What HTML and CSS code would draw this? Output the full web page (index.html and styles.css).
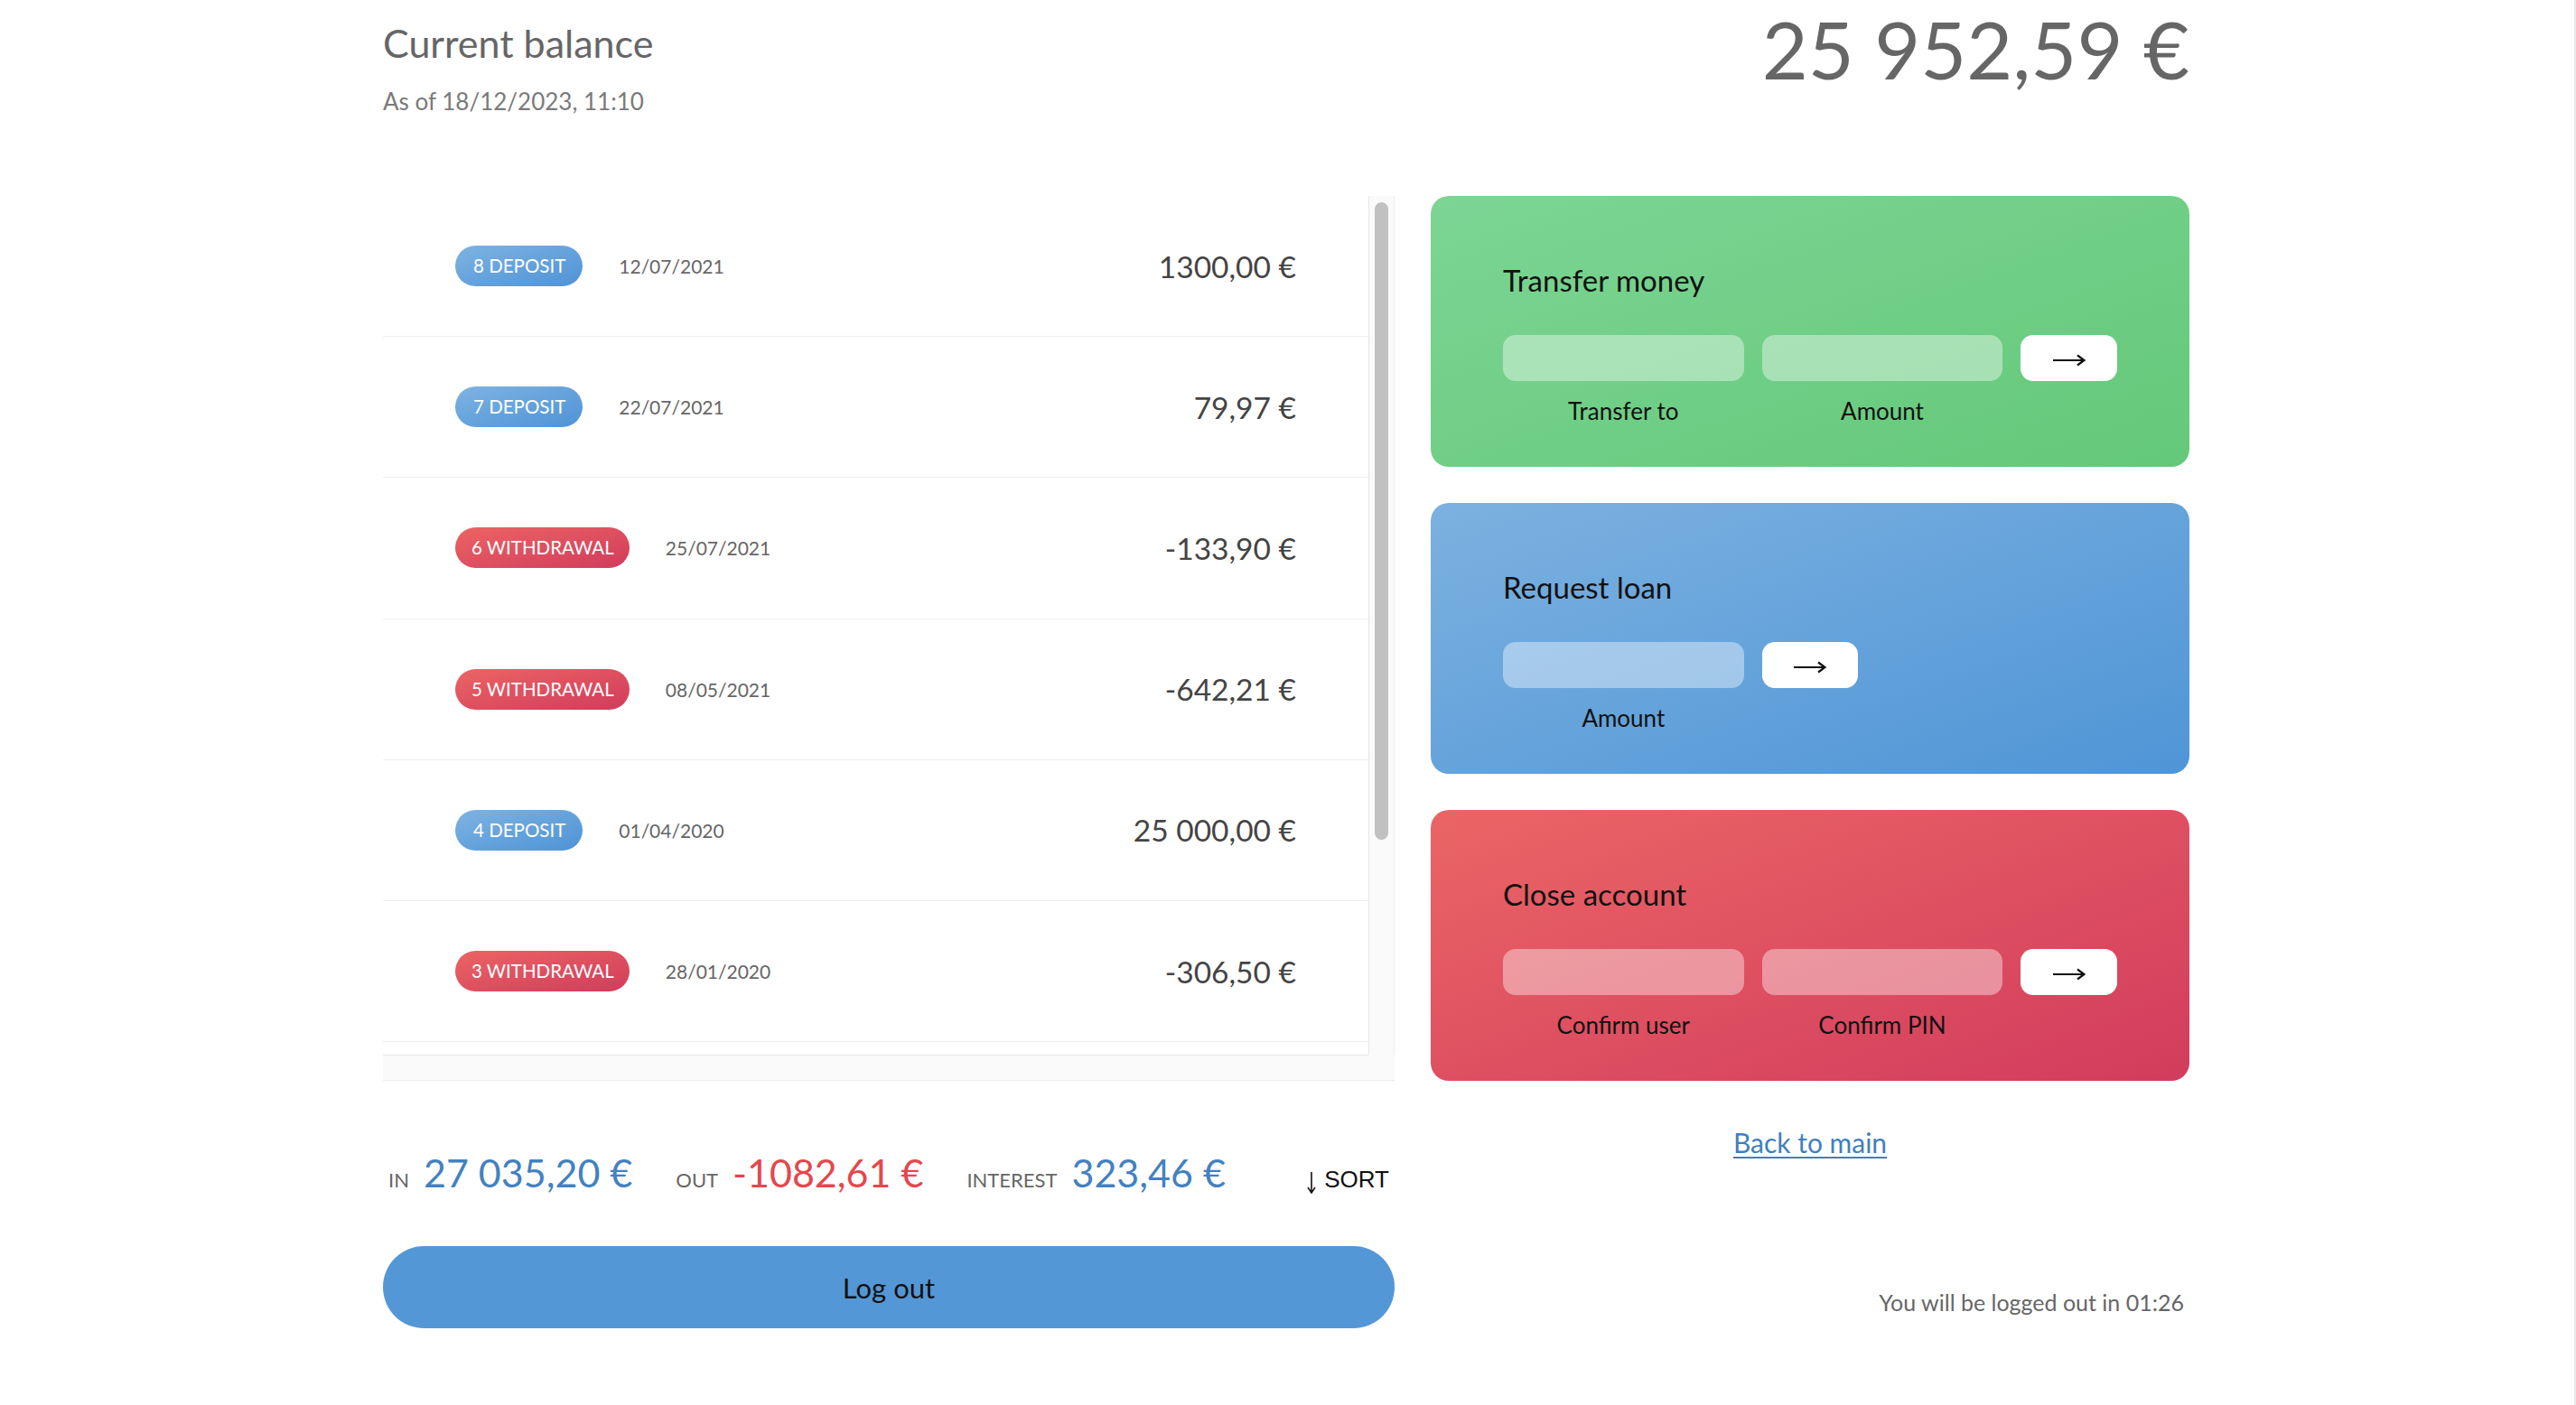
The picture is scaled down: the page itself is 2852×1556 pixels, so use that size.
FILE: index.html
```html
<!DOCTYPE html>
<html lang="en">
<head>
<meta charset="utf-8">
<title>Bankist</title>
<link rel="stylesheet" href="styles.css">
</head>
<body>
<main class="app">
  <div class="balance">
    <div class="balance-info">
      <p class="balance-label">Current balance</p>
      <p class="balance-date">As of <span>18/12/2023, 11:10</span></p>
    </div>
    <p class="balance-value">25&nbsp;952,59&nbsp;€</p>
  </div>

  <div class="movements">
    <div class="mov-list">
      <div class="mov-row">
        <span class="mov-type deposit">8 deposit</span>
        <span class="mov-date">12/07/2021</span>
        <span class="mov-value">1300,00&nbsp;€</span>
      </div>
      <div class="mov-row">
        <span class="mov-type deposit">7 deposit</span>
        <span class="mov-date">22/07/2021</span>
        <span class="mov-value">79,97&nbsp;€</span>
      </div>
      <div class="mov-row">
        <span class="mov-type withdrawal">6 withdrawal</span>
        <span class="mov-date">25/07/2021</span>
        <span class="mov-value">-133,90&nbsp;€</span>
      </div>
      <div class="mov-row">
        <span class="mov-type withdrawal">5 withdrawal</span>
        <span class="mov-date">08/05/2021</span>
        <span class="mov-value">-642,21&nbsp;€</span>
      </div>
      <div class="mov-row">
        <span class="mov-type deposit">4 deposit</span>
        <span class="mov-date">01/04/2020</span>
        <span class="mov-value">25&nbsp;000,00&nbsp;€</span>
      </div>
      <div class="mov-row">
        <span class="mov-type withdrawal">3 withdrawal</span>
        <span class="mov-date">28/01/2020</span>
        <span class="mov-value">-306,50&nbsp;€</span>
      </div>
      <div class="mov-row mov-row-tail"></div>
    </div>
    <div class="vscroll"><div class="vthumb"></div></div>
    <div class="hscroll"></div>
    <div class="scroll-corner"></div>
  </div>

  <div class="operation operation-transfer">
    <h2 class="op-title">Transfer money</h2>
    <form class="form form-3">
      <input type="text" class="form-input">
      <input type="number" class="form-input">
      <button type="button" class="form-btn" aria-label="Transfer">
        <svg class="arrow" viewBox="0 0 36 14" width="36" height="14"><path d="M0 7H34M27 1.5L34.5 7L27 12.5" fill="none" stroke="#111" stroke-width="2.2"/></svg>
      </button>
      <label class="form-label">Transfer to</label>
      <label class="form-label">Amount</label>
    </form>
  </div>

  <div class="operation operation-loan">
    <h2 class="op-title">Request loan</h2>
    <form class="form form-loan">
      <input type="number" class="form-input">
      <button type="button" class="form-btn" aria-label="Request">
        <svg class="arrow" viewBox="0 0 36 14" width="36" height="14"><path d="M0 7H34M27 1.5L34.5 7L27 12.5" fill="none" stroke="#111" stroke-width="2.2"/></svg>
      </button>
      <label class="form-label">Amount</label>
    </form>
  </div>

  <div class="operation operation-close">
    <h2 class="op-title">Close account</h2>
    <form class="form form-3">
      <input type="text" class="form-input">
      <input type="password" class="form-input">
      <button type="button" class="form-btn" aria-label="Close">
        <svg class="arrow" viewBox="0 0 36 14" width="36" height="14"><path d="M0 7H34M27 1.5L34.5 7L27 12.5" fill="none" stroke="#111" stroke-width="2.2"/></svg>
      </button>
      <label class="form-label">Confirm user</label>
      <label class="form-label">Confirm PIN</label>
    </form>
  </div>

  <div class="summary">
    <p class="summary-label">In</p>
    <p class="summary-value value-in">27&nbsp;035,20&nbsp;€</p>
    <p class="summary-label">Out</p>
    <p class="summary-value value-out">-1082,61&nbsp;€</p>
    <p class="summary-label">Interest</p>
    <p class="summary-value value-interest">323,46&nbsp;€</p>
    <button type="button" class="btn-sort"><svg class="sort-arrow" viewBox="0 0 10 24" width="10" height="24"><path d="M5 0V22M1 17L5 23L9 17" fill="none" stroke="#111" stroke-width="1.6"/></svg>SORT</button>
  </div>

  <div class="back">
    <a href="#" class="back-link">Back to main</a>
  </div>

  <button type="button" class="logout-btn">Log out</button>

  <p class="logout-timer">You will be logged out in <span class="timer">01:26</span></p>
</main>
</body>
</html>
```

FILE: styles.css
```css
* {
  margin: 0;
  padding: 0;
  box-sizing: border-box;
}

html {
  min-height: 100%;
  border-right: 2px solid #e8e8e8;
  background: #fff;
}

body {
  font-family: "Lato", "Noto Sans", sans-serif;
  color: #444;
  background: #fff;
  padding-right: 2px;
}

.app {
  width: 2000px;
  margin: 0 auto;
  display: grid;
  grid-template-columns: 4fr 3fr;
  grid-template-rows: 177px repeat(3, 300px) 103px 91px;
  gap: 40px;
}

/* Balance */
.balance {
  grid-column: 1 / -1;
  display: flex;
  justify-content: space-between;
  align-items: flex-start;
}

.balance-info {
  margin-top: 22px;
}

.balance-label {
  font-size: 43px;
  line-height: 1.2;
  color: #666;
}

.balance-date {
  margin-top: 23px;
  font-size: 26px;
  line-height: 1.2;
  color: #7a7a7a;
}

.balance-value {
  margin-top: 2px;
  font-size: 88px;
  line-height: 1.2;
  color: #666;
}

/* Movements */
.movements {
  grid-row: 2 / span 3;
  grid-column: 1;
  background: #fff;
  display: grid;
  grid-template-columns: 1fr 29px;
  grid-template-rows: 1fr 29px;
  overflow: hidden;
}

.mov-list {
  overflow: hidden;
  min-height: 0;
}

.vscroll {
  background: #fafafa;
  border-left: 1px solid #e6e6e6;
  border-right: 1px solid #ececec;
  padding: 7px 6px 0;
}

.vthumb {
  height: 706px;
  border-radius: 8px;
  background: #c1c1c1;
}

.hscroll {
  background: #fafafa;
  border-top: 1px solid #e6e6e6;
  border-bottom: 1px solid #ececec;
}

.scroll-corner {
  background: #fafafa;
  border-bottom: 1px solid #ececec;
}

.mov-row {
  height: 156.2px;
  padding: 0 80px;
  display: flex;
  align-items: center;
  border-bottom: 1px solid #eee;
}

.mov-type {
  display: inline-block;
  font-size: 20.5px;
  line-height: 45px;
  padding: 0 19px 0 20px;
  border-radius: 100px;
  color: #fff;
  text-transform: uppercase;
  margin-right: 40px;
}

.withdrawal {
  padding: 0 17px 0 18px;
}

.deposit {
  background-image: linear-gradient(to bottom right, #7db3e2, #4f93d6);
}

.withdrawal {
  background-image: linear-gradient(to bottom right, #ec6464, #d13c5c);
}

.mov-date {
  font-size: 21px;
  color: #666;
}

.mov-value {
  margin-left: auto;
  font-size: 33.5px;
  color: #444;
}

/* Operations */
.operation {
  grid-column: 2;
  border-radius: 20px;
  padding: 74px 80px 0;
  color: #111;
}

.operation-transfer {
  grid-row: 2;
  background-image: linear-gradient(to bottom right, #7cd594, #64c879);
}

.operation-loan {
  grid-row: 3;
  background-image: linear-gradient(to bottom right, #7cb1e0, #4f95d6);
}

.operation-close {
  grid-row: 4;
  background-image: linear-gradient(to bottom right, #eb6565, #d23c5d);
}

.op-title {
  font-size: 33px;
  font-weight: 400;
  line-height: 1.2;
  margin-bottom: 40px;
}

.form {
  display: grid;
  column-gap: 20px;
  row-gap: 18px;
}

.form-3 {
  grid-template-columns: 2.5fr 2.5fr 1fr;
}

.form-loan {
  grid-template-columns: 2.5fr 1fr 2.5fr;
}

.form-loan .form-label {
  grid-column: 1;
}

.form-input {
  height: 51px;
  width: 100%;
  border: none;
  border-radius: 14px;
  background: rgba(255, 255, 255, 0.4);
  font-family: inherit;
  font-size: 28px;
  padding: 0 20px;
  color: #333;
  outline: none;
}

.form-btn {
  height: 51px;
  border: none;
  border-radius: 14px;
  background: #fff;
  display: flex;
  align-items: center;
  justify-content: center;
  cursor: pointer;
}

.arrow {
  display: block;
  margin-top: 6px;
}

.form-label {
  font-size: 26px;
  line-height: 1.2;
  text-align: center;
  color: #111;
}

/* Summary */
.summary {
  grid-row: 5;
  grid-column: 1;
  display: flex;
  align-items: baseline;
  padding: 36px 6px 0;
}

.summary-label {
  font-size: 22px;
  text-transform: uppercase;
  color: #666;
  margin-right: 16px;
}

.summary-value {
  font-size: 43px;
  line-height: 1.2;
  margin-right: 48px;
}

.value-in,
.value-interest {
  color: #4381c1;
}

.value-out {
  color: #e5474d;
}

.btn-sort {
  margin-left: auto;
  border: none;
  background: none;
  font-family: "Liberation Sans", "DejaVu Sans", sans-serif;
  font-size: 26px;
  color: #111;
  cursor: pointer;
}

.sort-arrow {
  vertical-align: -7px;
  margin-right: 9px;
}

/* Back link */
.back {
  grid-row: 5;
  grid-column: 2;
  text-align: center;
  padding-top: 10px;
}

.back-link {
  font-size: 30px;
  line-height: 1.2;
  color: #3f7fbf;
  text-decoration: underline;
  text-decoration-thickness: 2px;
  text-underline-offset: 4px;
}

/* Logout */
.logout-btn {
  grid-row: 6;
  grid-column: 1;
  border: none;
  border-radius: 46px;
  background: #5497d6;
  font-family: inherit;
  font-size: 31px;
  color: #111;
  cursor: pointer;
}

.logout-timer {
  grid-row: 6;
  grid-column: 2;
  text-align: right;
  padding: 47px 6px 0;
  font-size: 25px;
  line-height: 1.2;
  color: #666;
}

.timer {
  color: #666;
}
```
